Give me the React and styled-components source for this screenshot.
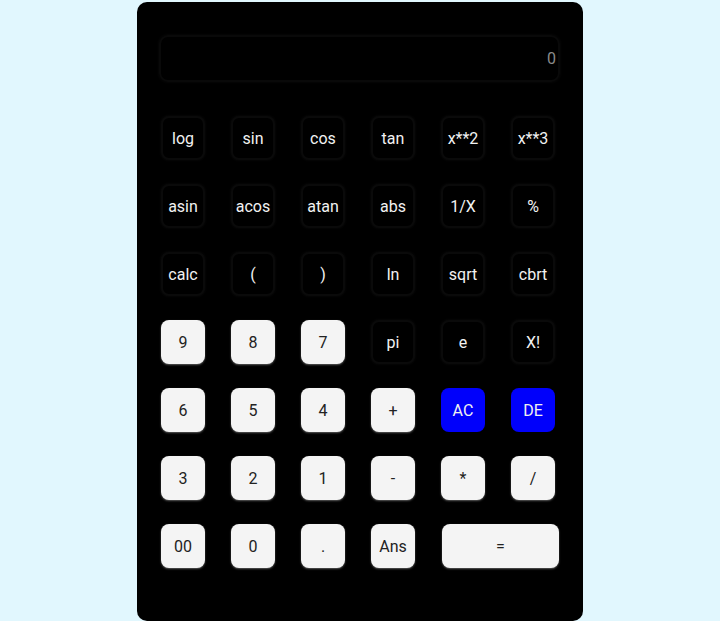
import React, { useState } from "react";
import styled, { createGlobalStyle, css } from "styled-components";

const GlobalStyle = createGlobalStyle`
  html, body {
    margin: 0;
    padding: 0;
    background: #e1f7fe;
    font-family: Roboto, "Liberation Sans", sans-serif;
  }
`;

const Page = styled.div`
  display: flex;
  justify-content: center;
  padding-top: 2px;
`;

const Card = styled.div`
  width: 446px;
  height: 619px;
  box-sizing: border-box;
  background: #000;
  border-radius: 10px;
  padding: 33px 23px 0 22px;
  display: flex;
  flex-direction: column;
  gap: 34px;
`;

const Display = styled.div`
  height: 47px;
  box-sizing: border-box;
  border: 2px solid #090909;
  border-radius: 9px;
  box-shadow: 0 0 3px rgba(255, 255, 255, 0.05);
  display: flex;
  align-items: center;
  justify-content: flex-end;
  padding-right: 2px;
  color: #8a8a8a;
  font-size: 16px;
`;

const Keys = styled.div`
  display: grid;
  grid-template-columns: repeat(6, 44px);
  grid-auto-rows: 44px;
  column-gap: 26px;
  row-gap: 24px;
  margin-left: 2px;
`;

const variants = {
  dark: css`
    background: #000;
    color: #f2f2f2;
    border: 2px solid #0a0a0a;
    box-shadow: 0 0 3px rgba(255, 255, 255, 0.05);
  `,
  light: css`
    background: #f4f4f4;
    color: #222;
    border: none;
    box-shadow: 0 1px 2px rgba(180, 180, 180, 0.5);
  `,
  blue: css`
    background: #0000fb;
    color: #f0f0f0;
    border: none;
  `,
};

const Key = styled.button`
  width: ${(p) => (p.$wide ? "117px" : "44px")};
  height: 44px;
  box-sizing: border-box;
  grid-column: span ${(p) => (p.$wide ? 2 : 1)};
  margin-left: ${(p) => (p.$wide ? "1px" : "0")};
  border-radius: 8px;
  font-family: Roboto, "Liberation Sans", sans-serif;
  font-size: 16px;
  padding: 0;
  cursor: pointer;
  display: flex;
  align-items: center;
  justify-content: center;
  ${(p) => variants[p.$kind]}
`;

const keys = [
  ["log", "dark"], ["sin", "dark"], ["cos", "dark"], ["tan", "dark"], ["x**2", "dark"], ["x**3", "dark"],
  ["asin", "dark"], ["acos", "dark"], ["atan", "dark"], ["abs", "dark"], ["1/X", "dark"], ["%", "dark"],
  ["calc", "dark"], ["(", "dark"], [")", "dark"], ["ln", "dark"], ["sqrt", "dark"], ["cbrt", "dark"],
  ["9", "light"], ["8", "light"], ["7", "light"], ["pi", "dark"], ["e", "dark"], ["X!", "dark"],
  ["6", "light"], ["5", "light"], ["4", "light"], ["+", "light"], ["AC", "blue"], ["DE", "blue"],
  ["3", "light"], ["2", "light"], ["1", "light"], ["-", "light"], ["*", "light"], ["/", "light"],
  ["00", "light"], ["0", "light"], [".", "light"], ["Ans", "light"], ["=", "light", true],
];

export default function App() {
  const [value] = useState("0");
  return (
    <Page>
      <GlobalStyle />
      <Card>
        <Display>{value}</Display>
        <Keys>
          {keys.map(([label, kind, wide]) => (
            <Key key={label} $kind={kind} $wide={wide}>
              {label}
            </Key>
          ))}
        </Keys>
      </Card>
    </Page>
  );
}
